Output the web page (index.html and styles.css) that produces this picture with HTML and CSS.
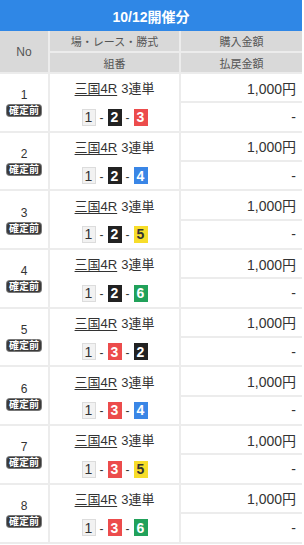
FILE: index.html
```html
<!DOCTYPE html>
<html lang="ja">
<head>
<meta charset="utf-8">
<link rel="stylesheet" href="styles.css">
</head>
<body>
<div class="wrap">
  <div class="title">10/12開催分</div>
  <div class="grid">
    <div class="th th-no">No</div>
    <div class="th">場・レース・勝式</div>
    <div class="th">購入金額</div>
    <div class="th">組番</div>
    <div class="th">払戻金額</div>

    <div class="no"><span class="num">1</span><span class="badge">確定前</span></div>
    <div class="bet"><div class="race"><u>三国4R</u> 3連単</div><div class="combo"><span class="b b1">1</span><span class="dash">-</span><span class="b b2">2</span><span class="dash">-</span><span class="b b3">3</span></div></div>
    <div class="amt">1,000円</div>
    <div class="amt">-</div>

    <div class="no"><span class="num">2</span><span class="badge">確定前</span></div>
    <div class="bet"><div class="race"><u>三国4R</u> 3連単</div><div class="combo"><span class="b b1">1</span><span class="dash">-</span><span class="b b2">2</span><span class="dash">-</span><span class="b b4">4</span></div></div>
    <div class="amt">1,000円</div>
    <div class="amt">-</div>

    <div class="no"><span class="num">3</span><span class="badge">確定前</span></div>
    <div class="bet"><div class="race"><u>三国4R</u> 3連単</div><div class="combo"><span class="b b1">1</span><span class="dash">-</span><span class="b b2">2</span><span class="dash">-</span><span class="b b5">5</span></div></div>
    <div class="amt">1,000円</div>
    <div class="amt">-</div>

    <div class="no"><span class="num">4</span><span class="badge">確定前</span></div>
    <div class="bet"><div class="race"><u>三国4R</u> 3連単</div><div class="combo"><span class="b b1">1</span><span class="dash">-</span><span class="b b2">2</span><span class="dash">-</span><span class="b b6">6</span></div></div>
    <div class="amt">1,000円</div>
    <div class="amt">-</div>

    <div class="no"><span class="num">5</span><span class="badge">確定前</span></div>
    <div class="bet"><div class="race"><u>三国4R</u> 3連単</div><div class="combo"><span class="b b1">1</span><span class="dash">-</span><span class="b b3">3</span><span class="dash">-</span><span class="b b2">2</span></div></div>
    <div class="amt">1,000円</div>
    <div class="amt">-</div>

    <div class="no"><span class="num">6</span><span class="badge">確定前</span></div>
    <div class="bet"><div class="race"><u>三国4R</u> 3連単</div><div class="combo"><span class="b b1">1</span><span class="dash">-</span><span class="b b3">3</span><span class="dash">-</span><span class="b b4">4</span></div></div>
    <div class="amt">1,000円</div>
    <div class="amt">-</div>

    <div class="no"><span class="num">7</span><span class="badge">確定前</span></div>
    <div class="bet"><div class="race"><u>三国4R</u> 3連単</div><div class="combo"><span class="b b1">1</span><span class="dash">-</span><span class="b b3">3</span><span class="dash">-</span><span class="b b5">5</span></div></div>
    <div class="amt">1,000円</div>
    <div class="amt">-</div>

    <div class="no"><span class="num">8</span><span class="badge">確定前</span></div>
    <div class="bet"><div class="race"><u>三国4R</u> 3連単</div><div class="combo"><span class="b b1">1</span><span class="dash">-</span><span class="b b3">3</span><span class="dash">-</span><span class="b b6">6</span></div></div>
    <div class="amt">1,000円</div>
    <div class="amt">-</div>
  </div>
</div>
</body>
</html>
```
FILE: styles.css
```css
* { box-sizing: border-box; }
html, body { margin: 0; padding: 0; background: #fff; }
body {
  font-family: "Liberation Sans", "Noto Sans CJK JP", sans-serif;
  color: #333;
}
.wrap { width: 302px; }
.title {
  height: 31px;
  background: #2f87e6;
  color: #fff;
  font-weight: bold;
  font-size: 14px;
  display: flex;
  align-items: center;
  justify-content: center;
}
.grid {
  display: grid;
  grid-template-columns: 48px 129px 121px;
  grid-template-rows: 20px 19px;
  grid-auto-rows: 27.35px;
  gap: 2px;
  background: #ececec;
  padding-bottom: 2px;
}
.th {
  background: #d9d9d9;
  color: #555;
  font-size: 11px;
  display: flex;
  align-items: center;
  justify-content: center;
}
.th-no { grid-row: span 2; font-size: 12px; }
.no {
  grid-row: span 2;
  background: #fff;
  display: flex;
  flex-direction: column;
  align-items: center;
  justify-content: center;
}
.num { font-size: 12px; line-height: 14px; color: #333; }
.badge {
  margin-top: 3px;
  background: #3a3a3a;
  color: #fff;
  font-size: 10px;
  font-weight: bold;
  line-height: 11px;
  padding: 0 2px;
  border-radius: 3px;
  box-shadow: 0 0 0 1px #777;
}
.bet {
  grid-row: span 2;
  background: #fff;
  display: grid;
  grid-template-rows: 1fr 1fr;
  row-gap: 2px;
}
.race {
  font-size: 13px;
  display: flex;
  align-items: center;
  justify-content: center;
  color: #333;
}
.race u { text-underline-offset: 2px; margin-right: 4px; }
.combo {
  display: flex;
  align-items: center;
  justify-content: center;
  gap: 4px;
}
.b {
  width: 14px;
  height: 17px;
  font-size: 14px;
  font-weight: bold;
  display: flex;
  align-items: center;
  justify-content: center;
  color: #fff;
}
.b1 { background: #f2f2f2; color: #333; box-shadow: inset 0 0 0 1px #dcdcdc; font-weight: normal; }
.b2 { background: #222; }
.b3 { background: #ec4c4c; }
.b4 { background: #3a86e6; }
.b5 { background: #f7dd2a; color: #333; }
.b6 { background: #21a15a; }
.dash { font-size: 12px; color: #333; padding-top: 2px; }
.amt {
  background: #fff;
  font-size: 14px;
  display: flex;
  align-items: center;
  justify-content: flex-end;
  padding-right: 6px;
  color: #333;
}
```
